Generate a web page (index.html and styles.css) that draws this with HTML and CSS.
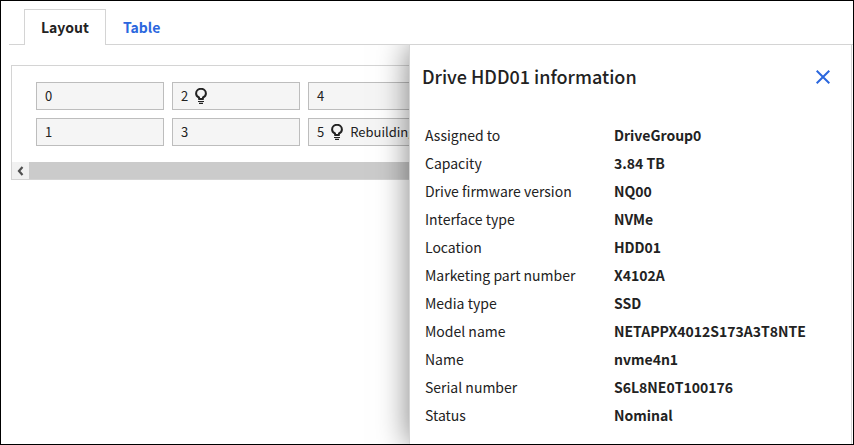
FILE: index.html
```html
<!DOCTYPE html>
<html lang="en">
<head>
<meta charset="utf-8">
<title>Drives</title>
<link rel="stylesheet" href="styles.css">
</head>
<body>
<svg class="defs" aria-hidden="true">
  <symbol id="bulb" viewBox="0 0 12 16">
    <path d="M4 11V9.500C2.200 8.700 1.100 7.300 1.100 5.500a4.900 4.700 0 0 1 9.800 0c0 1.800-1.100 3.200-2.900 4v1.500z" fill="none" stroke="currentColor" stroke-width="2" stroke-linejoin="round"/>
    <path d="M3 13.500h6M4 15.300h4" fill="none" stroke="currentColor" stroke-width="1.200"/>
  </symbol>
</svg>
<div class="page">
  <div class="tabs" role="tablist">
    <button class="tab tab-active" type="button" role="tab" aria-selected="true">Layout</button>
    <button class="tab" type="button" role="tab" aria-selected="false">Table</button>
  </div>
  <main class="content">
    <section class="shelf">
      <div class="bays">
        <button class="bay" type="button">0</button>
        <button class="bay" type="button">1</button>
        <button class="bay" type="button">2<svg class="bulb"><use href="#bulb"/></svg></button>
        <button class="bay" type="button">3</button>
        <button class="bay" type="button">4</button>
        <button class="bay" type="button">5<svg class="bulb"><use href="#bulb"/></svg>Rebuilding</button>
      </div>
      <div class="scroller">
        <button class="scroll-left" type="button" aria-label="Scroll left">
          <svg class="chevron" viewBox="0 0 8 10"><path d="M5.500 1L2 5l3.500 4" fill="none" stroke="currentColor" stroke-width="2.200"/></svg>
        </button>
        <div class="thumb"></div>
      </div>
    </section>
    <aside class="drawer">
      <header class="drawer-head">
        <h2 class="title">Drive HDD01 information</h2>
        <button class="close" type="button" aria-label="Close">
          <svg class="cross" viewBox="0 0 14 14"><path d="M.7.700l12.600 12.600M13.300.7L.7 13.300" fill="none" stroke="currentColor" stroke-width="2"/></svg>
        </button>
      </header>
      <dl class="facts">
        <dt>Assigned to</dt><dd>DriveGroup0</dd>
        <dt>Capacity</dt><dd>3.84 TB</dd>
        <dt>Drive firmware version</dt><dd>NQ00</dd>
        <dt>Interface type</dt><dd>NVMe</dd>
        <dt>Location</dt><dd>HDD01</dd>
        <dt>Marketing part number</dt><dd>X4102A</dd>
        <dt>Media type</dt><dd>SSD</dd>
        <dt>Model name</dt><dd>NETAPPX4012S173A3T8NTE</dd>
        <dt>Name</dt><dd>nvme4n1</dd>
        <dt>Serial number</dt><dd>S6L8NE0T100176</dd>
        <dt>Status</dt><dd>Nominal</dd>
      </dl>
    </aside>
  </main>
</div>
</body>
</html>
```

FILE: styles.css
```css
* { box-sizing: border-box; }

body {
  margin: 0;
  color: #222;
  background: #fff;
  font-family: "Noto Sans CJK SC", "Noto Sans", sans-serif;
  font-size: 14px;
  line-height: 28px;
}

button {
  margin: 0;
  padding: 0;
  border: 0;
  background: none;
  color: inherit;
  font: inherit;
  cursor: pointer;
}

svg { display: block; }

.defs { display: none; }

.page {
  display: flex;
  flex-direction: column;
  height: 100vh;
  padding-top: 8px;
  border: 1px solid #000;
}

.tabs {
  display: flex;
  margin-left: 8px;
  padding-left: 15px;
  border-bottom: 1px solid #d4d4d4;
}

.tab {
  height: 35px;
  padding: 0 16px;
  border: 1px solid transparent;
  border-bottom: 0;
  color: #2b67de;
  font-weight: 700;
}

.tab-active {
  height: 36px;
  margin-bottom: -1px;
  padding-bottom: 1px;
  border-color: #d4d4d4;
  background: #fff;
  color: #222;
}

.content {
  position: relative;
  flex: 1;
  overflow: hidden;
  padding: 20px 8px 0 10px;
}

.shelf {
  border: 1px solid #d4d4d4;
  overflow: hidden;
}

.bays {
  display: grid;
  grid-template-rows: 28px 28px;
  grid-auto-columns: 128px;
  grid-auto-flow: column;
  gap: 8px;
  padding: 16px 24px;
}

.bay {
  display: flex;
  align-items: center;
  gap: 7px;
  padding: 0 8px;
  border: 1px solid #bdbdbd;
  background: #f5f5f5;
  font-size: 13px;
  line-height: 26px;
  white-space: nowrap;
}

.bulb {
  flex: none;
  width: 12px;
  height: 16px;
}

.scroller {
  display: flex;
  height: 17px;
  background: #f1f1f1;
}

.scroll-left {
  display: grid;
  place-items: center;
  width: 17px;
  color: #505050;
}

.chevron {
  width: 8px;
  height: 10px;
}

.thumb {
  flex: 1;
  background: #cbcbcb;
}

.drawer {
  position: absolute;
  top: 0;
  right: 1px;
  bottom: 0;
  width: 52%;
  padding: 16px 12px;
  border: solid #d4d4d4;
  border-width: 0 1px;
  background: #fff;
  box-shadow: 0 0 30px rgba(0, 0, 0, 0.5);
  clip-path: inset(0 0 0 -48px);
}

.drawer-head {
  display: flex;
  align-items: flex-start;
  justify-content: space-between;
}

.title {
  margin: 0;
  font-size: 18px;
  font-weight: 500;
  line-height: 30px;
}

.close {
  display: grid;
  place-items: center;
  width: 32px;
  height: 32px;
  color: #2b67de;
}

.cross {
  width: 14px;
  height: 14px;
}

.facts {
  display: grid;
  grid-template-columns: 189px 1fr;
  margin: 28px 0 0;
  padding-left: 3px;
}

.facts dt,
.facts dd { margin: 0; }

.facts dd { font-weight: 700; }
```
